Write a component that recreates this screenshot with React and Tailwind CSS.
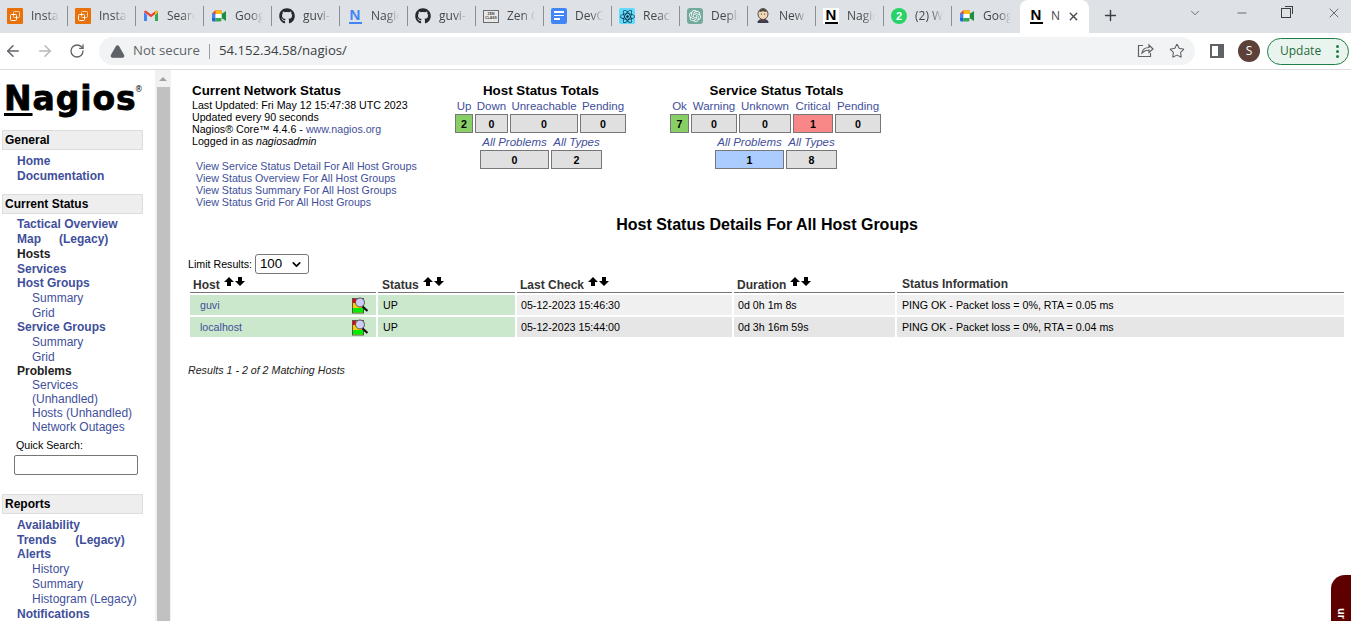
import {
  ArrowLeft,
  ArrowRight,
  ChevronDown,
  Minus,
  Plus,
  RotateCw,
  Star,
  TriangleAlert,
  X,
} from "lucide-react";
import {FaGithub, FaReact} from "react-icons/fa";
import {SiOpenai} from "react-icons/si";

const ARIAL = "font-['Liberation_Sans',Arial,sans-serif]";

function AwsIcon() {
  return (
    <svg width="16" height="16" viewBox="0 0 16 16">
      <rect width="16" height="16" rx="1" fill="#e8710a" />
      <rect x="6.5" y="3.5" width="6" height="6" rx="1" fill="none" stroke="#fbd7b0" strokeWidth="1" />
      <rect x="3.5" y="6.5" width="6" height="6" rx="1" fill="none" stroke="#fff" strokeWidth="1" />
    </svg>
  );
}

function GmailIcon() {
  return (
    <svg width="16" height="16" viewBox="0 0 16 16">
      <path d="M1 4v9h3V7z" fill="#4285f4" />
      <path d="M15 4v9h-3V7z" fill="#34a853" />
      <path d="M1 4l7 5.2L15 4v-.6L13.2 2.6 8 6.4 2.8 2.6 1 3.4z" fill="#ea4335" />
      <path d="M12 7l3-3V3.4l-1.8-.8L12 3.5z" fill="#fbbc04" />
    </svg>
  );
}

function MeetIcon() {
  return (
    <svg width="16" height="16" viewBox="0 0 16 16">
      <path d="M4 2.5h6.5V6H4.5v4H1V5.5z" fill="#ea4335" />
      <path d="M4.5 2.5h6v3.5h-6z" fill="#fbbc04" />
      <path d="M1 10h3.5v3.5H2.5A1.5 1.5 0 0 1 1 12z" fill="#1967d2" />
      <path d="M1 5.5h3.5V10H1z" fill="#4285f4" />
      <path d="M4.5 10h6v2a1.5 1.5 0 0 1-1.5 1.5H4.5z" fill="#34a853" />
      <path d="M10.5 6v4l4.5 3V3z" fill="#1e8e3e" />
      <path d="M4.5 6h6v4h-6z" fill="#fff" />
    </svg>
  );
}

function NagiosBlue() {
  return (
    <div className="flex w-4 h-4 flex-col items-center text-[#4285f4]">
      <span className={`${ARIAL} text-[15px] leading-[14px] font-bold`}>N</span>
      <span className="w-[13px] h-[2px] bg-[#4285f4]" />
    </div>
  );
}

function NagiosBlack() {
  return (
    <div className="flex w-4 h-4 flex-col items-center bg-white text-black">
      <span className={`${ARIAL} text-[15px] leading-[14px] font-black`}>N</span>
      <span className="w-[13px] h-[2px] bg-black" />
    </div>
  );
}

function ZenIcon() {
  return (
    <div className="flex w-4 h-[13px] flex-col items-center justify-center border border-[#6b6b6b] bg-[#e8e8e8]">
      <span className={`${ARIAL} text-[3.5px] leading-[4px] font-bold text-[#444]`}>ZEN</span>
      <span className={`${ARIAL} text-[3.5px] leading-[4px] font-bold text-[#444]`}>CLASS</span>
    </div>
  );
}

function DocsIcon() {
  return (
    <div className="flex w-4 h-4 flex-col gap-[2px] rounded-[2px] bg-[#4285f4] px-[3px] pt-[3px]">
      <span className="h-[1.5px] w-full bg-white" />
      <span className="h-[1.5px] w-full bg-white" />
      <span className="h-[1.5px] w-[6px] bg-white" />
    </div>
  );
}

function JenkinsIcon() {
  return (
    <svg width="16" height="16" viewBox="0 0 16 16">
      <ellipse cx="8" cy="6" rx="5" ry="5.5" fill="#f0d6b7" stroke="#3a2f2b" strokeWidth="0.8" />
      <path d="M4 3c1-2.500 6-3 8 0l-1 1c-2-1-4-1-6 0z" fill="#4a4340" />
      <path d="M2.500 15c0-3 2-4 5.500-4s5.500 1 5.500 4z" fill="#3d3d4e" />
      <path d="M6.500 11.500L8 13l1.500-1.500z" fill="#d33833" />
      <circle cx="6.500" cy="6" r="0.6" fill="#333" />
      <circle cx="9.500" cy="6" r="0.6" fill="#333" />
    </svg>
  );
}

function WhatsIcon() {
  return (
    <div className={`${ARIAL} flex w-4 h-4 items-center justify-center rounded-full bg-[#25d366] text-[11px] font-bold text-white`}>
      2
    </div>
  );
}

const tabs = [
  {icon: <AwsIcon />, title: "Instance"},
  {icon: <AwsIcon />, title: "Instance"},
  {icon: <GmailIcon />, title: "Search"},
  {icon: <MeetIcon />, title: "Google"},
  {icon: <FaGithub size={16} color="#24292f" />, title: "guvi-"},
  {icon: <NagiosBlue />, title: "Nagios"},
  {icon: <FaGithub size={16} color="#24292f" />, title: "guvi-"},
  {icon: <ZenIcon />, title: "Zen C"},
  {icon: <DocsIcon />, title: "DevO"},
  {
    icon: (
      <div className="flex w-4 h-4 items-center justify-center rounded-[2px] bg-[#61dafb]">
        <FaReact size={15} color="#0b2b3c" />
      </div>
    ),
    title: "React",
  },
  {
    icon: (
      <div className="flex w-4 h-4 items-center justify-center rounded-[3px] bg-[#74aa9c]">
        <SiOpenai size={12} color="#fff" />
      </div>
    ),
    title: "Deploy",
  },
  {icon: <JenkinsIcon />, title: "New I"},
  {icon: <NagiosBlack />, title: "Nagios"},
  {icon: <WhatsIcon />, title: "(2) W"},
  {icon: <MeetIcon />, title: "Google"},
];

function TabStrip() {
  return (
    <div className="flex h-[33px] shrink-0 items-start bg-[#dee1e6]">
      {tabs.map((tab, i) => (
        <div key={i} className="flex h-[33px] w-[68px] shrink-0 items-center pl-[7px] pb-px">
          <span className="flex w-4 shrink-0 justify-center">{tab.icon}</span>
          <span className="ml-[8px] w-[28px] overflow-hidden whitespace-nowrap text-[12px] text-[#45474a] [mask-image:linear-gradient(to_right,black_55%,transparent)]">
            {tab.title}
          </span>
          {i !== 14 && <span className="ml-[8px] h-5 w-px shrink-0 bg-[#8a8d91]" />}
        </div>
      ))}
      <div className="flex h-[33px] w-[69px] shrink-0 items-center rounded-t-[8px] bg-white pl-[8px] pb-px">
        <NagiosBlack />
        <span className="ml-[7px] w-[10px] overflow-hidden text-[12px] text-[#45474a]">N</span>
        <X size={13} strokeWidth={2.5} color="#45474a" className="ml-[6px]" />
      </div>
      <Plus size={17} strokeWidth={2} color="#3c4043" className="ml-[13px] mt-[7px]" />
      <div className="ml-auto flex h-[26px] items-center text-[#3c4043]">
        <ChevronDown size={14} strokeWidth={1.25} className="mr-[33px]" />
        <Minus size={14} strokeWidth={1.25} className="mr-[32px]" />
        <div className="mr-[35px] relative h-[10px] w-[10px] border border-[#3c4043]">
          <span className="absolute -top-[3px] -right-[3px] h-[8px] w-[8px] border-t border-r border-[#3c4043]" />
        </div>
        <X size={16} strokeWidth={1.1} className="mr-[9px]" />
      </div>
    </div>
  );
}

function Toolbar() {
  return (
    <div className="flex h-[37px] shrink-0 items-center border-b border-[#dadce0] bg-white pr-[2px]">
      <ArrowLeft size={18} strokeWidth={2} color="#5f6368" className="ml-[4px]" />
      <ArrowRight size={18} strokeWidth={2} color="#b5b7ba" className="ml-[14px]" />
      <RotateCw size={16} strokeWidth={2} color="#5f6368" className="ml-[15px]" />
      <div className="ml-[14px] flex h-7 flex-1 items-center rounded-full bg-[#f1f3f4] pl-[11px] text-[13.2px]">
        <TriangleAlert size={15} fill="#5f6368" color="#5f6368" />
        <span className="ml-[8px] text-[#5f6368]">Not secure</span>
        <span className="mx-[9px] h-[15px] w-px bg-[#9a9da1]" />
        <span className="text-[#3c4043]">54.152.34.58/nagios/</span>
        <div className="ml-auto flex items-center pr-[10px]">
          <svg width="18" height="18" viewBox="0 0 18 18" fill="none" stroke="#5f6368" strokeWidth="1.2" className="mr-[15px]">
            <path d="M7 3.500H2.500v11h12V11" />
            <path d="M6 11c.5-3.500 3.500-5.500 7-5.500V3l4 4-4 3.500V8c-3 0-5 1-7 3z" />
          </svg>
          <Star size={16} strokeWidth={1.6} color="#5f6368" />
        </div>
      </div>
      <div className="ml-[15px] flex h-[14px] w-[14px] justify-end border-2 border-[#5f6368]">
        <span className="h-full w-[4px] bg-[#5f6368]" />
      </div>
      <div className="ml-[14px] flex h-[22px] w-[22px] items-center justify-center rounded-full bg-[#5d4037] text-[12px] text-white">
        S
      </div>
      <div className="ml-[7px] flex h-[27px] w-[82px] items-center rounded-full border border-[#1e7e45] bg-[#eaf4ee] pl-[12px] text-[12px] text-[#1e6b3c]">
        Update
        <span className="ml-[15px] flex flex-col gap-[2px]">
          <span className="h-[3px] w-[3px] rounded-full bg-[#1e7e45]" />
          <span className="h-[3px] w-[3px] rounded-full bg-[#1e7e45]" />
          <span className="h-[3px] w-[3px] rounded-full bg-[#1e7e45]" />
        </span>
      </div>
    </div>
  );
}

function NavHeader({children}) {
  return (
    <div className="ml-[2px] flex h-5 w-[141px] items-center border border-[#ddd] bg-[#eee] pl-[2px] text-[12px] font-bold text-black">
      {children}
    </div>
  );
}

function NavLink({children, h = 15, dark}) {
  return (
    <div
      className={`pl-[17px] text-[12px] font-bold ${dark ? "text-[#222]" : "text-[#3f4f9b]"} ${
        h === 14 ? "h-[14px] leading-[14px]" : "h-[15px] leading-[15px]"
      }`}
    >
      {children}
    </div>
  );
}

function NavSub({children, h = 15}) {
  return (
    <div
      className={`pl-[32px] text-[12px] whitespace-nowrap text-[#3f4f9b] ${
        h === 14 ? "h-[14px] leading-[14px]" : "h-[15px] leading-[15px]"
      }`}
    >
      {children}
    </div>
  );
}

function Sidebar() {
  return (
    <div className={`${ARIAL} w-[155px] shrink-0 overflow-hidden`}>
      <div className="flex h-[60px] items-start pl-[4px] pt-[10px]">
        <div className="relative font-['DejaVu_Sans',sans-serif] text-[33px] leading-[37px] font-bold tracking-[0.9px] text-black [-webkit-text-stroke:0.8px_black]">
          <span className="underline decoration-[3px] underline-offset-[3px] [text-decoration-skip-ink:none]">N</span>agios
          <span className="absolute -right-[7px] top-[6px] text-[8px] leading-[8px] font-normal [-webkit-text-stroke:0px_black]">®</span>
        </div>
      </div>
      <NavHeader>General</NavHeader>
      <div className="h-[4px]" />
      <NavLink>Home</NavLink>
      <NavLink>Documentation</NavLink>
      <div className="h-[10px]" />
      <NavHeader>Current Status</NavHeader>
      <div className="h-[3px]" />
      <NavLink>Tactical Overview</NavLink>
      <NavLink>
        Map<span className="ml-[18px]">(Legacy)</span>
      </NavLink>
      <NavLink dark>Hosts</NavLink>
      <NavLink h={14}>Services</NavLink>
      <NavLink>Host Groups</NavLink>
      <NavSub>Summary</NavSub>
      <NavSub h={14}>Grid</NavSub>
      <NavLink>Service Groups</NavLink>
      <NavSub>Summary</NavSub>
      <NavSub h={14}>Grid</NavSub>
      <NavLink h={14} dark>Problems</NavLink>
      <NavSub h={14}>Services</NavSub>
      <NavSub h={14}>(Unhandled)</NavSub>
      <NavSub h={14}>Hosts (Unhandled)</NavSub>
      <NavSub h={14}>Network Outages</NavSub>
      <div className="mt-[4px] h-[14px] pl-[16px] text-[10.67px] leading-[14px] text-black">Quick Search:</div>
      <div className="mt-[3px] ml-[14px] h-5 w-[124px] rounded-[2px] border border-[#767676] bg-white" />
      <div className="h-[19px]" />
      <NavHeader>Reports</NavHeader>
      <div className="h-[4px]" />
      <NavLink>Availability</NavLink>
      <NavLink h={14}>
        Trends<span className="ml-[19px]">(Legacy)</span>
      </NavLink>
      <NavLink>Alerts</NavLink>
      <NavSub>History</NavSub>
      <NavSub>Summary</NavSub>
      <NavSub>Histogram (Legacy)</NavSub>
      <NavLink>Notifications</NavLink>
    </div>
  );
}

function Scrollbar() {
  return (
    <div className="flex w-[16px] shrink-0 flex-col items-center bg-[#f1f1f1]">
      <div className="mt-[7px] h-0 w-0 border-x-[4px] border-b-[4px] border-x-transparent border-b-[#a3a3a3]" />
      <div className="mt-[6px] w-[13px] flex-1 bg-[#c1c1c1]" />
    </div>
  );
}

function StatCell({children, className = "bg-[#e0e0e0]"}) {
  return (
    <div className={`flex h-[19px] items-center justify-center border border-[#777] text-[10.67px] font-bold text-black ${className}`}>
      {children}
    </div>
  );
}

function StatHead({children, italic}) {
  return (
    <div className={`whitespace-nowrap text-center text-[11.5px] leading-[13px] text-[#3f4f9b] ${italic ? "italic" : ""}`}>
      {children}
    </div>
  );
}

function StatusTotals() {
  return (
    <>
      <div className="ml-[21px] w-[172px] shrink-0">
        <div className="h-[16px] pt-[1px] text-center text-[13.33px] leading-[16px] font-bold text-black">Host Status Totals</div>
        <div className="mt-[2px] grid grid-cols-[18px_33px_68px_46px] gap-x-[2px] gap-y-[1px]">
          <StatHead>Up</StatHead>
          <StatHead>Down</StatHead>
          <StatHead>Unreachable</StatHead>
          <StatHead>Pending</StatHead>
          <StatCell className="bg-[#88d066]">2</StatCell>
          <StatCell>0</StatCell>
          <StatCell>0</StatCell>
          <StatCell>0</StatCell>
        </div>
        <div className="mt-[3px] ml-[25px] grid grid-cols-[69px_51px] gap-x-[2px] gap-y-[1px]">
          <StatHead italic>All Problems</StatHead>
          <StatHead italic>All Types</StatHead>
          <StatCell>0</StatCell>
          <StatCell>2</StatCell>
        </div>
      </div>
      <div className="ml-[43px] w-[213px] shrink-0">
        <div className="h-[16px] pt-[1px] text-center text-[13.33px] leading-[16px] font-bold text-black">Service Status Totals</div>
        <div className="mt-[2px] grid grid-cols-[19px_46px_52px_40px_46px] gap-x-[2px] gap-y-[1px]">
          <StatHead>Ok</StatHead>
          <StatHead>Warning</StatHead>
          <StatHead>Unknown</StatHead>
          <StatHead>Critical</StatHead>
          <StatHead>Pending</StatHead>
          <StatCell className="bg-[#88d066]">7</StatCell>
          <StatCell>0</StatCell>
          <StatCell>0</StatCell>
          <StatCell className="bg-[#f88888]">1</StatCell>
          <StatCell>0</StatCell>
        </div>
        <div className="mt-[3px] ml-[45px] grid grid-cols-[69px_51px] gap-x-[2px] gap-y-[1px]">
          <StatHead italic>All Problems</StatHead>
          <StatHead italic>All Types</StatHead>
          <StatCell className="bg-[#aaccff]">1</StatCell>
          <StatCell>8</StatCell>
        </div>
      </div>
    </>
  );
}

function InfoBox() {
  return (
    <div className="w-[246px] shrink-0 pl-[4px]">
      <div className="text-[13.33px] leading-[16px] pt-[1px] font-bold text-black">Current Network Status</div>
      <div className="text-[10.67px] leading-[12px] text-black">
        <div>Last Updated: Fri May 12 15:47:38 UTC 2023</div>
        <div>Updated every 90 seconds</div>
        <div>
          Nagios® Core™ 4.4.6 - <span className="text-[#3f4f9b]">www.nagios.org</span>
        </div>
        <div>
          Logged in as <span className="italic">nagiosadmin</span>
        </div>
      </div>
      <div className="mt-[13px] pl-[4px] text-[10.67px] leading-[12px] text-[#3f4f9b]">
        <div>View Service Status Detail For All Host Groups</div>
        <div>View Status Overview For All Host Groups</div>
        <div>View Status Summary For All Host Groups</div>
        <div>View Status Grid For All Host Groups</div>
      </div>
    </div>
  );
}

function SortArrows() {
  return (
    <span className="ml-[4px] inline-flex -translate-y-[2px] gap-[1px] self-center">
      <svg width="10" height="9" viewBox="0 0 10 9"><path d="M5 0l5 5H7v4H3V5H0z" fill="#000" /></svg>
      <svg width="10" height="9" viewBox="0 0 10 9"><path d="M5 9L0 4h3V0h4v4h3z" fill="#000" /></svg>
    </span>
  );
}

function HostIcon() {
  return (
    <svg width="17" height="17" viewBox="0 0 17 17">
      <rect x="0.500" y="1.500" width="11" height="14.500" fill="#fc0" stroke="#555" />
      <rect x="1" y="2" width="3" height="4" fill="#e00" />
      <rect x="1" y="11" width="10" height="4.500" fill="#0e0" />
      <path d="M10 9l5.500 5" stroke="#111" strokeWidth="2.200" />
      <circle cx="8" cy="5.500" r="4.500" fill="#ccccf5" stroke="#555" />
    </svg>
  );
}

const rows = [
  {host: "guvi", last: "05-12-2023 15:46:30", duration: "0d 0h 1m 8s", info: "PING OK - Packet loss = 0%, RTA = 0.05 ms", bg: "bg-[#f1f0f0]"},
  {host: "localhost", last: "05-12-2023 15:44:00", duration: "0d 3h 16m 59s", info: "PING OK - Packet loss = 0%, RTA = 0.04 ms", bg: "bg-[#e6e6e6]"},
];

const heads = [
  {label: "Host", pad: "pl-[3px]"},
  {label: "Status", pad: "pl-[4px]"},
  {label: "Last Check", pad: "pl-[3px]"},
  {label: "Duration", pad: "pl-[3px]"},
];

function HostTable() {
  return (
    <div className="ml-[2px] mt-[1px] grid w-[1154px] grid-cols-[186px_137px_215px_161px_447px] gap-x-[2px]">
      {heads.map((head) => (
        <div key={head.label} className={`flex h-[18px] items-end border-b border-[#777] text-[12px] leading-[14px] font-bold whitespace-nowrap text-[#333] ${head.pad}`}>
          {head.label}
          <SortArrows />
        </div>
      ))}
      <div className="flex h-[18px] items-end border-b border-[#777] pb-px pl-[5px] text-[12px] leading-[14px] font-bold text-[#333]">
        Status Information
      </div>
      {rows.map((row) => (
        <div key={row.host} className="col-span-5 mt-[2px] grid grid-cols-[186px_137px_215px_161px_447px] gap-x-[2px] text-[10.67px] text-black">
          <div className="flex h-5 items-center justify-between bg-[#cce8cc] pl-[10px] pr-[7px] text-[#3f4f9b]">
            {row.host}
            <HostIcon />
          </div>
          <div className="flex h-5 items-center bg-[#cce8cc] pl-[5px]">UP</div>
          <div className={`flex h-5 items-center pl-[4px] ${row.bg}`}>{row.last}</div>
          <div className={`flex h-5 items-center pl-[4px] ${row.bg}`}>{row.duration}</div>
          <div className={`flex h-5 items-center pl-[5px] ${row.bg}`}>{row.info}</div>
        </div>
      ))}
    </div>
  );
}

function Main() {
  return (
    <div className={`${ARIAL} relative min-w-0 flex-1 overflow-hidden bg-white pl-[17px] pt-[12px]`}>
      <div className="flex">
        <InfoBox />
        <StatusTotals />
      </div>
      <div className="mt-[8px] pr-[5px] text-center text-[16px] leading-[18px] font-bold text-black">
        Host Status Details For All Host Groups
      </div>
      <div className="mt-[20px] flex h-5 items-center text-[10.67px] text-black">
        Limit Results:
        <div className="ml-[3px] flex h-5 w-[54px] items-center justify-between rounded-[3px] border border-[#767676] pl-[4px] pr-[5px] text-[13.33px]">
          100
          <ChevronDown size={13} strokeWidth={3} />
        </div>
      </div>
      <HostTable />
      <div className="mt-[27px] text-[10.67px] leading-[13px] italic text-[#222]">Results 1 - 2 of 2 Matching Hosts</div>
      <div className="absolute right-0 top-[505px] flex h-[60px] w-[20px] justify-center overflow-hidden rounded-tl-[14px] bg-[#5e0000]">
        <span className="mt-[33px] rotate-90 self-start text-[11px] leading-[11px] font-bold text-white">ur</span>
      </div>
    </div>
  );
}

export default function App() {
  return (
    <div className="flex h-[621px] w-[1351px] flex-col overflow-hidden bg-white font-['Open_Sans',sans-serif]">
      <TabStrip />
      <Toolbar />
      <div className="flex min-h-0 flex-1">
        <Sidebar />
        <Scrollbar />
        <Main />
      </div>
    </div>
  );
}
